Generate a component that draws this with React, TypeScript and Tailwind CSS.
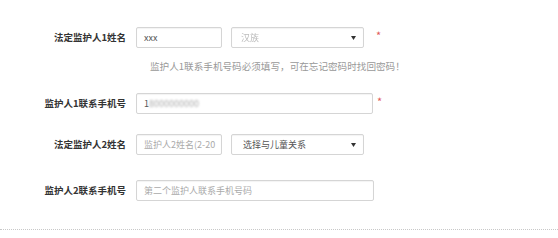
import React from "react";

const font = { fontFamily: '"Noto Sans CJK SC", "Noto Sans", sans-serif' };

function Label({ children }: { children: React.ReactNode }) {
  return (
    <div className="w-[126px] shrink-0 text-right text-[9.5px] font-bold text-[#333] leading-[13px]">
      {children}
    </div>
  );
}

function Box({ w, children, arrow }: { w: string; children?: React.ReactNode; arrow?: boolean }) {
  return (
    <div
      className={`${w} h-[21px] shrink-0 flex items-center justify-between border border-[#d5d5d5] rounded-[2px] bg-white shadow-[inset_0_1px_1px_rgba(0,0,0,0.05)] pl-[7px] pr-[6px] text-[9px] leading-[12px]`}
    >
      <div className="flex items-center whitespace-nowrap">{children}</div>
      {arrow && (
        <svg width="5" height="4" viewBox="0 0 5 4" className="mr-[1px]">
          <path d="M0 0 L5 0 L2.5 4 Z" fill="#333" />
        </svg>
      )}
    </div>
  );
}

function Star({ ml }: { ml: string }) {
  return <span className={`${ml} text-[11px] leading-[12px] text-[#e05a5a] -mt-[6px]`}>*</span>;
}

export default function App() {
  return (
    <div className="w-[558px] h-[238px] bg-white overflow-hidden flex flex-col" style={font}>
      <div className="mt-[27px] flex items-center">
        <Label>法定监护人1姓名</Label>
        <div className="ml-[10px] flex items-center">
          <Box w="w-[86px]">
            <span className="text-[#555]">xxx</span>
          </Box>
          <div className="ml-[9px]">
            <Box w="w-[133px]" arrow>
              <span className="text-[#bbb] blur-[0.6px] ml-[2px]">汉族</span>
            </Box>
          </div>
          <Star ml="ml-[12px]" />
        </div>
      </div>

      <div className="mt-[12px] ml-[150px] text-[9.6px] leading-[13px] text-[#999] whitespace-nowrap">
        监护人1联系手机号码必须填写，可在忘记密码时找回密码！
      </div>

      <div className="mt-[20px] flex items-center">
        <Label>监护人1联系手机号</Label>
        <div className="ml-[10px] flex items-center">
          <Box w="w-[237px]">
            <span className="text-[#555]">1</span>
            <span className="text-[#aaa] blur-[0.8px]">8000000000</span>
          </Box>
          <Star ml="ml-[4px]" />
        </div>
      </div>

      <div className="mt-[20px] flex items-center">
        <Label>法定监护人2姓名</Label>
        <div className="ml-[10px] flex items-center">
          <Box w="w-[86px]">
            <span className="text-[#aaa]">监护人2姓名(2-20</span>
          </Box>
          <div className="ml-[9px]">
            <Box w="w-[133px]" arrow>
              <span className="text-[#555] ml-[4px]">选择与儿童关系</span>
            </Box>
          </div>
        </div>
      </div>

      <div className="mt-[25px] flex items-center">
        <Label>监护人2联系手机号</Label>
        <div className="ml-[10px] flex items-center">
          <Box w="w-[238px]">
            <span className="text-[#aaa]">第二个监护人联系手机号码</span>
          </Box>
        </div>
      </div>

      <div className="mt-[28px] border-t border-dotted border-[#c8c8c8]" />
    </div>
  );
}
